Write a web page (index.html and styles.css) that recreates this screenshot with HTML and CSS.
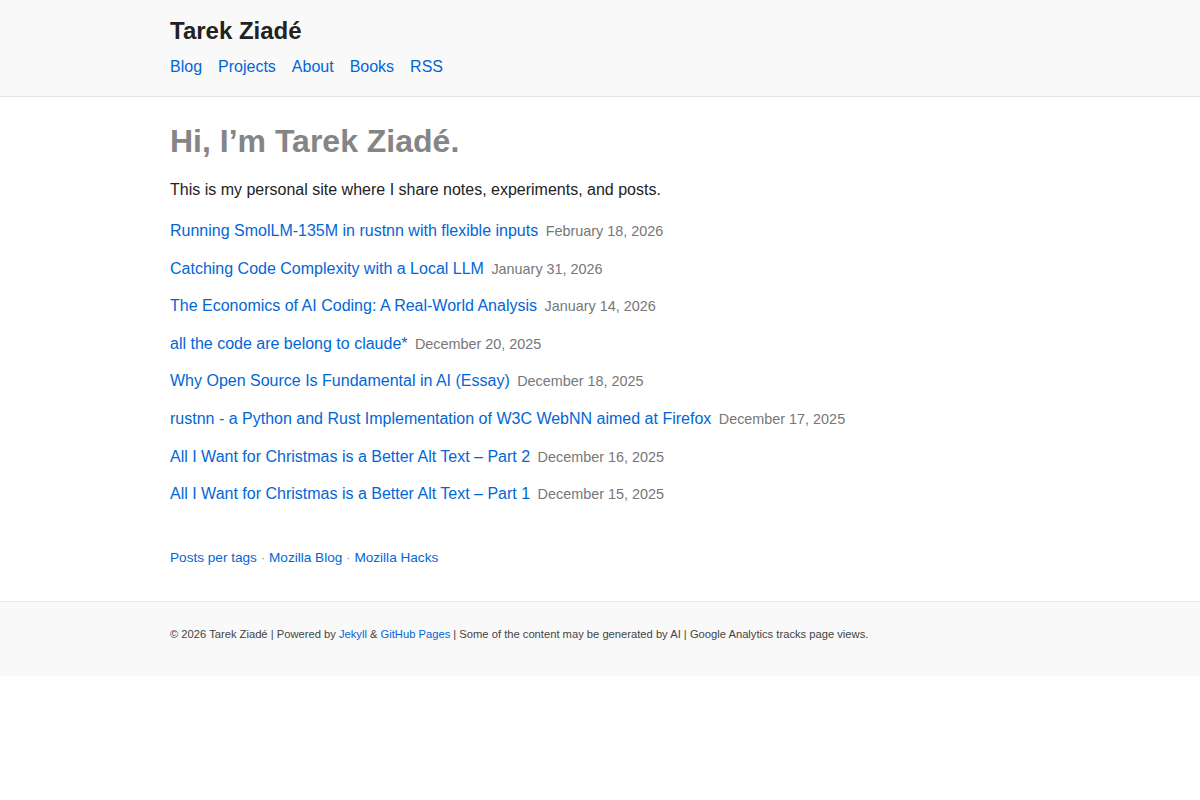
FILE: index.html
```html
<!DOCTYPE html>
<html lang="en">
<head>
  <meta charset="UTF-8" />
  <meta name="viewport" content="width=device-width, initial-scale=1.0" />
  <title>Tarek Ziadé</title>
  <link rel="stylesheet" href="styles.css">
</head>
<body>
  <header class="site-header">
    <div class="wrapper">
      <a class="site-title" href="/">Tarek Ziadé</a>
      <nav class="site-nav">
        <a href="/">Blog</a>
        <a href="/projects/">Projects</a>
        <a href="/about/">About</a>
        <a href="/books/">Books</a>
        <a href="/feed.xml">RSS</a>
      </nav>
    </div>
  </header>

  <main class="wrapper page-content">
    <h1 class="hero">Hi, I’m Tarek Ziadé.</h1>
    <p class="intro">This is my personal site where I share notes, experiments, and posts.</p>

    <ul class="post-list">
      <li><a href="#">Running SmolLM-135M in rustnn with flexible inputs</a> <span class="post-date">February 18, 2026</span></li>
      <li><a href="#">Catching Code Complexity with a Local LLM</a> <span class="post-date">January 31, 2026</span></li>
      <li><a href="#">The Economics of AI Coding: A Real-World Analysis</a> <span class="post-date">January 14, 2026</span></li>
      <li><a href="#">all the code are belong to claude*</a> <span class="post-date">December 20, 2025</span></li>
      <li><a href="#">Why Open Source Is Fundamental in AI (Essay)</a> <span class="post-date">December 18, 2025</span></li>
      <li><a href="#">rustnn - a Python and Rust Implementation of W3C WebNN aimed at Firefox</a> <span class="post-date">December 17, 2025</span></li>
      <li><a href="#">All I Want for Christmas is a Better Alt Text – Part 2</a> <span class="post-date">December 16, 2025</span></li>
      <li><a href="#">All I Want for Christmas is a Better Alt Text – Part 1</a> <span class="post-date">December 15, 2025</span></li>
    </ul>

    <p class="more-links">
      <a href="/tags/">Posts per tags</a> <span class="sep">·</span>
      <a href="#">Mozilla Blog</a> <span class="sep">·</span>
      <a href="#">Mozilla Hacks</a>
    </p>
  </main>

  <footer class="site-footer">
    <div class="wrapper">
      © 2026 Tarek Ziadé | Powered by <a href="https://jekyllrb.com">Jekyll</a> &amp; <a href="https://pages.github.com">GitHub Pages</a> | Some of the content may be generated by AI | Google Analytics tracks page views.
    </div>
  </footer>
</body>
</html>
```

FILE: styles.css
```css
body {
  font-family: "Liberation Sans", Arial, sans-serif;
  margin: 0;
  color: #222;
  background: #fff;
  font-size: 16px;
}

a {
  color: #0366d6;
  text-decoration: none;
}

.wrapper {
  max-width: 860px;
  margin: 0 auto;
}

.site-header {
  background: #f9f9f9;
  border-bottom: 1px solid #e5e5e5;
  padding: 16px 0 17px;
}

.site-title {
  display: block;
  font-size: 24px;
  line-height: 30px;
  font-weight: bold;
  color: #222;
}

.site-nav {
  display: flex;
  gap: 16px;
  margin-top: 9px;
  line-height: 24px;
}

.page-content {
  padding: 24px 0 33px;
}

.hero {
  font-size: 32px;
  line-height: 40px;
  margin: 0;
  color: #858585;
}

.intro {
  margin: 17px 0 16px;
  line-height: 24px;
}

.post-list {
  list-style: none;
  margin: 0;
  padding: 0;
}

.post-list li {
  line-height: 25.6px;
  margin-bottom: 12px;
}

.post-date {
  color: #777;
  font-size: 0.9em;
  line-height: 1;
  margin-left: 3px;
}

.more-links {
  font-size: 0.85em;
  line-height: 20px;
  margin: 41px 0 0;
}

.more-links .sep {
  color: #999;
}

.site-footer {
  background: #f9f9f9;
  border-top: 1px solid #e8e8e8;
  padding: 24px 0 34px;
  font-size: 0.7em;
  line-height: 16px;
  color: #444;
}
```
